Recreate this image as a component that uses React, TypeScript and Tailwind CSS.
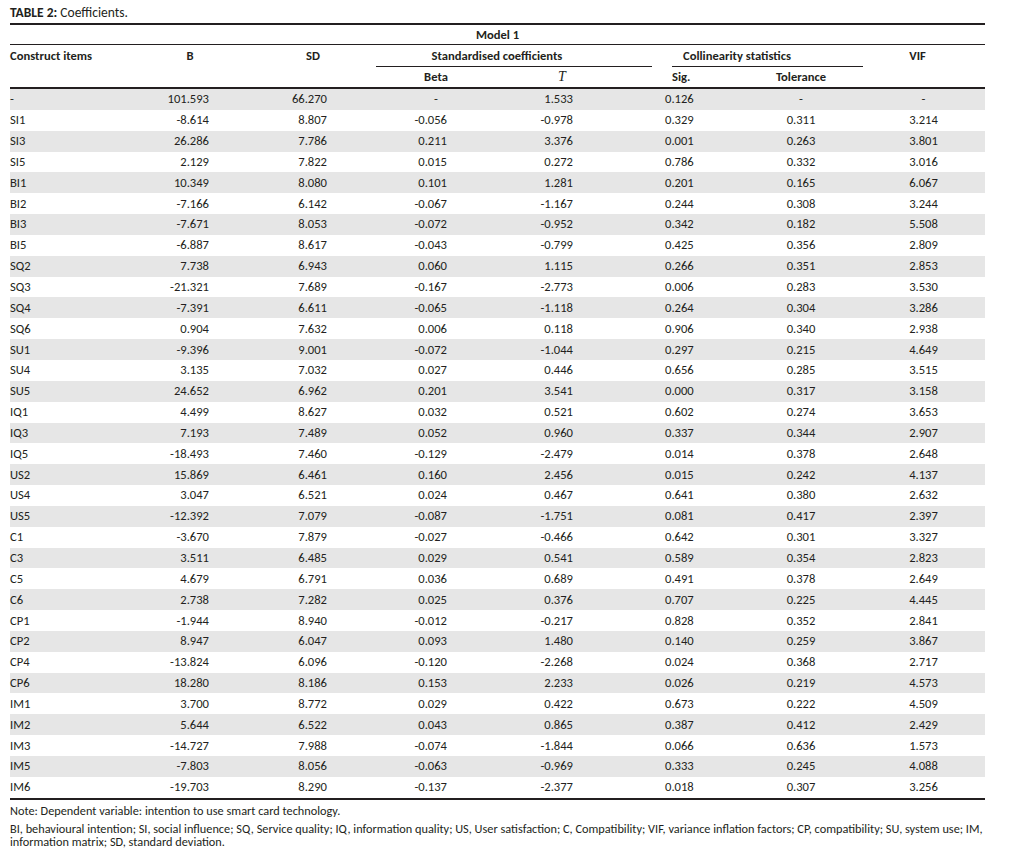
import * as React from "react";

type Row = [string, string, string, string, string, string, string, string];

const rows: Row[] = [
  ["-", "101.593", "66.270", "-", "1.533", "0.126", "-", "-"],
  ["SI1", "-8.614", "8.807", "-0.056", "-0.978", "0.329", "0.311", "3.214"],
  ["SI3", "26.286", "7.786", "0.211", "3.376", "0.001", "0.263", "3.801"],
  ["SI5", "2.129", "7.822", "0.015", "0.272", "0.786", "0.332", "3.016"],
  ["BI1", "10.349", "8.080", "0.101", "1.281", "0.201", "0.165", "6.067"],
  ["BI2", "-7.166", "6.142", "-0.067", "-1.167", "0.244", "0.308", "3.244"],
  ["BI3", "-7.671", "8.053", "-0.072", "-0.952", "0.342", "0.182", "5.508"],
  ["BI5", "-6.887", "8.617", "-0.043", "-0.799", "0.425", "0.356", "2.809"],
  ["SQ2", "7.738", "6.943", "0.060", "1.115", "0.266", "0.351", "2.853"],
  ["SQ3", "-21.321", "7.689", "-0.167", "-2.773", "0.006", "0.283", "3.530"],
  ["SQ4", "-7.391", "6.611", "-0.065", "-1.118", "0.264", "0.304", "3.286"],
  ["SQ6", "0.904", "7.632", "0.006", "0.118", "0.906", "0.340", "2.938"],
  ["SU1", "-9.396", "9.001", "-0.072", "-1.044", "0.297", "0.215", "4.649"],
  ["SU4", "3.135", "7.032", "0.027", "0.446", "0.656", "0.285", "3.515"],
  ["SU5", "24.652", "6.962", "0.201", "3.541", "0.000", "0.317", "3.158"],
  ["IQ1", "4.499", "8.627", "0.032", "0.521", "0.602", "0.274", "3.653"],
  ["IQ3", "7.193", "7.489", "0.052", "0.960", "0.337", "0.344", "2.907"],
  ["IQ5", "-18.493", "7.460", "-0.129", "-2.479", "0.014", "0.378", "2.648"],
  ["US2", "15.869", "6.461", "0.160", "2.456", "0.015", "0.242", "4.137"],
  ["US4", "3.047", "6.521", "0.024", "0.467", "0.641", "0.380", "2.632"],
  ["US5", "-12.392", "7.079", "-0.087", "-1.751", "0.081", "0.417", "2.397"],
  ["C1", "-3.670", "7.879", "-0.027", "-0.466", "0.642", "0.301", "3.327"],
  ["C3", "3.511", "6.485", "0.029", "0.541", "0.589", "0.354", "2.823"],
  ["C5", "4.679", "6.791", "0.036", "0.689", "0.491", "0.378", "2.649"],
  ["C6", "2.738", "7.282", "0.025", "0.376", "0.707", "0.225", "4.445"],
  ["CP1", "-1.944", "8.940", "-0.012", "-0.217", "0.828", "0.352", "2.841"],
  ["CP2", "8.947", "6.047", "0.093", "1.480", "0.140", "0.259", "3.867"],
  ["CP4", "-13.824", "6.096", "-0.120", "-2.268", "0.024", "0.368", "2.717"],
  ["CP6", "18.280", "8.186", "0.153", "2.233", "0.026", "0.219", "4.573"],
  ["IM1", "3.700", "8.772", "0.029", "0.422", "0.673", "0.222", "4.509"],
  ["IM2", "5.644", "6.522", "0.043", "0.865", "0.387", "0.412", "2.429"],
  ["IM3", "-14.727", "7.988", "-0.074", "-1.844", "0.066", "0.636", "1.573"],
  ["IM5", "-7.803", "8.056", "-0.063", "-0.969", "0.333", "0.245", "4.088"],
  ["IM6", "-19.703", "8.290", "-0.137", "-2.377", "0.018", "0.307", "3.256"],
];

const widths = [120, 120, 126, 120, 156, 88, 122, 123];

function DataRow({ row, shaded }: { row: Row; shaded: boolean }) {
  const [item, b, sd, beta, t, sig, tol, vif] = row;
  return (
    <tr className={`h-[20.85px] ${shaded ? "bg-[#e6e6e6]" : "bg-white"}`}>
      <td className="p-0 text-left">{item}</td>
      <td className="p-0 pr-[41px] text-right">{b}</td>
      <td className="p-0 pr-[49px] text-right">{sd}</td>
      <td className={beta === "-" ? "p-0 text-center" : "p-0 pr-[49px] text-right"}>{beta}</td>
      <td className="p-0 pr-[79px] text-right">{t}</td>
      <td className="p-0 pl-[13px] text-left">{sig}</td>
      <td className="p-0 text-center">{tol}</td>
      <td className="p-0 text-center">{vif}</td>
    </tr>
  );
}

export default function App() {
  return (
    <div className="min-h-[860px] w-[1019px] bg-white pl-[10px] pt-[5px] font-['Carlito','Lato',sans-serif] text-[#231f20]">
      <p className="h-[16px] text-[13.5px] leading-[16px]">
        <span className="font-bold">TABLE 2:</span> Coefficients.
      </p>

      <table className="mt-[2px] w-[975px] table-fixed border-separate border-spacing-0 border-t-2 border-[#231f20] text-[12.6px] leading-[14px]">
        <colgroup>
          {widths.map((w, i) => (
            <col key={i} style={{ width: w }} />
          ))}
        </colgroup>
        <thead>
          {/* Model */}
          <tr className="h-[20px]">
            <th colSpan={8} className="border-b border-[#231f20] p-0 text-center font-bold">
              Model 1
            </th>
          </tr>
          {/* Column groups */}
          <tr className="h-[22px] font-bold">
            <th className="p-0 text-left align-middle">Construct items</th>
            <th className="p-0 text-center align-middle">B</th>
            <th className="p-0 text-center align-middle">SD</th>
            <th colSpan={2} className="p-0 align-bottom">
              <div className="flex h-[22px] items-center justify-center border-b border-[#231f20] pr-[34px]">
                Standardised coefficients
              </div>
            </th>
            <th colSpan={2} className="p-0 align-bottom">
              <div className="ml-[20px] mr-[-1px] flex h-[22px] items-center border-b border-[#231f20] pl-[11px]">
                Collinearity statistics
              </div>
            </th>
            <th className="p-0 pr-[12px] text-center align-middle">VIF</th>
          </tr>
          <tr className="h-[22px] font-bold">
            <th className="border-b-2 border-[#231f20] p-0" />
            <th className="border-b-2 border-[#231f20] p-0" />
            <th className="border-b-2 border-[#231f20] p-0" />
            <th className="border-b-2 border-[#231f20] p-0 text-center">Beta</th>
            <th className="border-b-2 border-[#231f20] p-0 pr-[24px] text-center font-['Liberation_Serif',serif] text-[14px] font-normal italic">
              T
            </th>
            <th className="border-b-2 border-[#231f20] p-0 pl-[20px] text-left">Sig.</th>
            <th className="border-b-2 border-[#231f20] p-0 text-center">Tolerance</th>
            <th className="border-b-2 border-[#231f20] p-0" />
          </tr>
        </thead>
        <tbody>
          {rows.map((r, i) => (
            <DataRow key={r[0] + i} row={r} shaded={i % 2 === 0} />
          ))}
        </tbody>
      </table>
      <div className="w-[975px] border-t-2 border-[#231f20]" />

      <p className="mt-[4px] text-[12.3px] leading-[14px]">
        Note: Dependent variable: intention to use smart card technology.
      </p>
      <div className="mt-[4px] text-[12.3px] leading-[13px]">
        <div className="whitespace-nowrap">
          BI, behavioural intention; SI, social influence; SQ, Service quality; IQ, information quality; US, User satisfaction; C,
          Compatibility; VIF, variance inflation factors; CP, compatibility; SU, system use; IM,
        </div>
        <div className="whitespace-nowrap">information matrix; SD, standard deviation.</div>
      </div>
    </div>
  );
}
